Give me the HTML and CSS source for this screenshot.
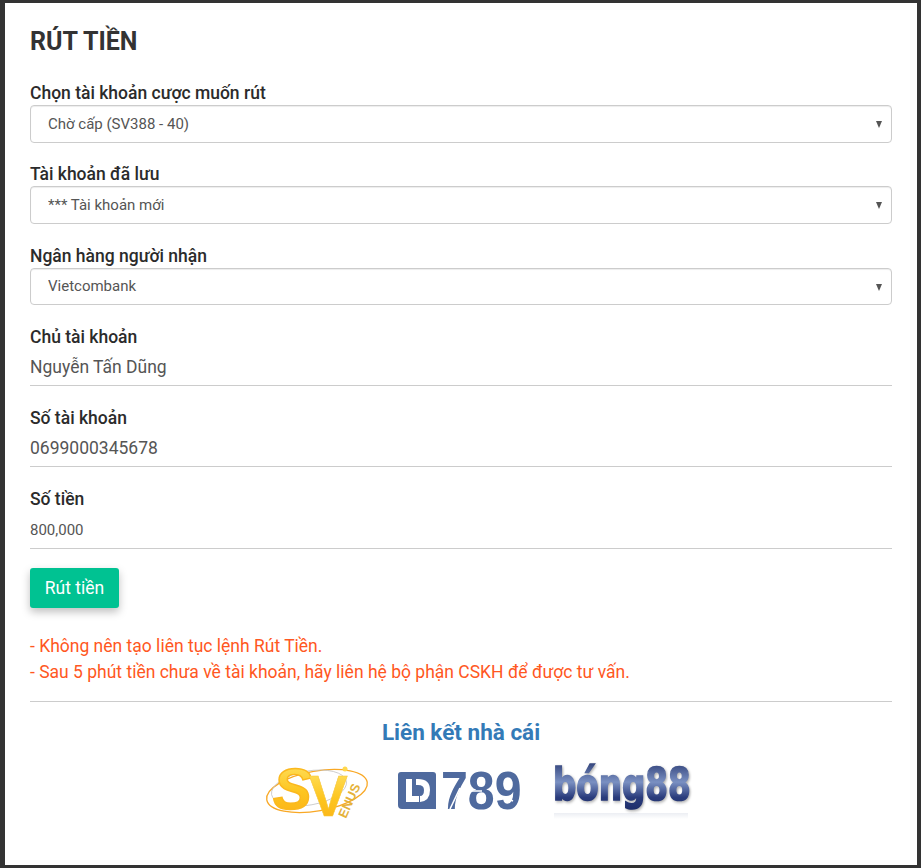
FILE: index.html
```html
<!DOCTYPE html>
<html lang="vi">
<head>
  <meta charset="UTF-8" />
  <title>Rút tiền</title>
  <link rel="stylesheet" href="styles.css">
</head>
<body>
  <div class="panel">
    <h2 class="title">RÚT TIỀN</h2>
    <form class="withdraw-form">
      <div class="field">
        <label for="account">Chọn tài khoản cược muốn rút</label>
        <div class="select-wrap">
          <select id="account"><option>Chờ cấp (SV388 - 40)</option></select>
        </div>
      </div>
      <div class="field">
        <label for="saved">Tài khoản đã lưu</label>
        <div class="select-wrap">
          <select id="saved"><option>*** Tài khoản mới</option></select>
        </div>
      </div>
      <div class="field">
        <label for="bank">Ngân hàng người nhận</label>
        <div class="select-wrap">
          <select id="bank"><option>Vietcombank</option></select>
        </div>
      </div>
      <div class="field">
        <label for="owner">Chủ tài khoản</label>
        <input id="owner" class="line-input" type="text" value="Nguyễn Tấn Dũng">
      </div>
      <div class="field">
        <label for="number">Số tài khoản</label>
        <input id="number" class="line-input" type="text" value="0699000345678">
      </div>
      <div class="field">
        <label for="amount">Số tiền</label>
        <input id="amount" class="line-input small" type="text" value="800,000">
      </div>
      <button class="submit" type="button">Rút tiền</button>
    </form>

    <p class="notes">
      - Không nên tạo liên tục lệnh Rút Tiền.<br>
      - Sau 5 phút tiền chưa về tài khoản, hãy liên hệ bộ phận CSKH để được tư vấn.
    </p>
    <hr class="divider">

    <h3 class="partners-title">Liên kết nhà cái</h3>
    <div class="partners">
      <svg class="logo" width="108" height="60" viewBox="0 0 108 60">
        <defs>
          <linearGradient id="svGold" x1="0" y1="0" x2="0" y2="1">
            <stop offset="0" stop-color="#ffe56a"/>
            <stop offset=".55" stop-color="#fdc51f"/>
            <stop offset="1" stop-color="#fbb016"/>
          </linearGradient>
        </defs>
        <ellipse cx="55" cy="29" rx="51" ry="20" transform="rotate(-10 55 29)" fill="none" stroke="#f9a825" stroke-width="1.3"/>
        <ellipse cx="47" cy="26" rx="38" ry="17" transform="rotate(-10 47 26)" fill="none" stroke="#c4c4c4" stroke-width=".8"/>
        <circle cx="83" cy="7" r="2.5" fill="#ffd84d"/>
        <text class="sv-text" transform="translate(11 47) scale(1.45)" fill="url(#svGold)" stroke="#fbb81e" stroke-width="1">S</text>
        <text class="sv-v" transform="translate(47 54) scale(1.45)" fill="url(#svGold)" stroke="#f6c63a" stroke-width=".4">V</text>
        <text class="sv-small" transform="translate(84 57) rotate(-66)">ENUS</text>
      </svg>
      <svg class="logo" width="126" height="60" viewBox="0 0 126 60">
        <path d="M3 10H35Q38 10 38 13V47H4Q0 47 0 43V13Q0 10 3 10Z" fill="#4f6a9e"/>
        <path d="M8 17H14V34H21V40H8ZM18 17H20Q32 17 32 28Q32 39 22 40V34Q26 34 26 28Q26 23 20 23H18Z" fill="#fff"/>
        <text class="ld-text" transform="translate(43 47) scale(1.05 1.15)">789</text>
        <path d="M52 47L62 26M69 29H84M106 35L115 39" stroke="#fff" stroke-width="1.6" fill="none"/>
      </svg>
      <svg class="logo" width="142" height="60" viewBox="0 0 142 60">
        <defs>
          <linearGradient id="bongBlue" x1="0" y1="0" x2="0" y2="1">
            <stop offset="0" stop-color="#26366f"/>
            <stop offset=".45" stop-color="#7a90c2"/>
            <stop offset=".75" stop-color="#2a3c7c"/>
            <stop offset="1" stop-color="#1e2d69"/>
          </linearGradient>
          <linearGradient id="bongFade" x1="0" y1="0" x2="0" y2="1">
            <stop offset="0" stop-color="#eceef3"/>
            <stop offset="1" stop-color="#fff"/>
          </linearGradient>
        </defs>
        <rect x="2" y="51" width="134" height="6" fill="url(#bongFade)"/>
        <text class="bong-text" transform="translate(1 38) scale(1.02 1.37)" fill="url(#bongBlue)" stroke="url(#bongBlue)" stroke-width="1.2">bóng88</text>
      </svg>
    </div>
  </div>
</body>
</html>
```

FILE: styles.css
```css
* {
  box-sizing: border-box;
}

html, body {
  height: 100%;
}

body {
  margin: 0;
  padding: 3px 4px 3px 5px;
  background: #333;
  font-family: Roboto, "Open Sans", sans-serif;
  color: #333;
  overflow: hidden;
}

.panel {
  height: 100%;
  background: #fff;
  padding: 25px 25px 0;
}

.title {
  margin: 0 0 25px;
  font-size: 25px;
  line-height: 28px;
  font-weight: 700;
}

.withdraw-form {
  display: flex;
  flex-direction: column;
  align-items: stretch;
}

.field {
  display: flex;
  flex-direction: column;
  height: 81.28px;
}

.field label {
  height: 24px;
  font-size: 17.5px;
  line-height: 25px;
  font-weight: 500;
  color: #2b2b2b;
}

.select-wrap {
  position: relative;
}

.select-wrap::after {
  content: "";
  position: absolute;
  top: 16px;
  right: 10px;
  border-left: 3.5px solid transparent;
  border-right: 3.5px solid transparent;
  border-top: 7px solid #555;
}

.select-wrap select {
  display: block;
  width: 100%;
  height: 37.6px;
  padding: 0 30px 0 17px;
  border: 1px solid #ccc;
  border-radius: 4px;
  background: #fff;
  box-shadow: inset 0 1px 1px rgba(0,0,0,.075);
  font-family: inherit;
  font-size: 15px;
  color: #555;
  appearance: none;
}

.line-input {
  display: block;
  width: 100%;
  height: 37.4px;
  padding: 0;
  border: 0;
  border-bottom: 1px solid #ccc;
  outline: none;
  font-family: inherit;
  font-size: 17.5px;
  color: #555;
}

.line-input.small {
  font-size: 15px;
}

.submit {
  align-self: flex-start;
  width: 89px;
  height: 40px;
  margin-top: -.5px;
  border: none;
  border-radius: 3px;
  background: #00c292;
  box-shadow: 0 4px 8px rgba(0,0,0,.25);
  font-family: inherit;
  font-size: 17.5px;
  color: #fff;
  cursor: pointer;
}

.notes {
  margin: 25px 0 0;
  font-size: 17.5px;
  line-height: 26px;
  color: #ff5722;
}

.divider {
  margin: 16px 0 0;
  border: 0;
  border-top: 1px solid #ccc;
}

.partners-title {
  margin: 17px 0 0;
  text-align: center;
  font-size: 22.5px;
  line-height: 26px;
  font-weight: 700;
  color: #337ab7;
}

.partners {
  display: flex;
  justify-content: center;
  align-items: flex-start;
  gap: 28px;
  margin-top: 17px;
  padding-left: 34px;
}

.logo {
  display: block;
  flex: none;
}

.sv-text, .sv-v {
  font-family: "Liberation Sans", sans-serif;
  font-size: 40px;
  font-weight: 700;
}

.sv-text {
  font-style: italic;
}

.sv-small {
  font-family: "Liberation Sans", sans-serif;
  font-size: 13px;
  font-weight: 700;
  fill: #e5b23a;
}

.ld-text {
  font-family: "Liberation Sans", sans-serif;
  font-size: 46px;
  font-weight: 700;
  fill: #4f6a9e;
}

.bong-text {
  font-family: "DejaVu Sans", sans-serif;
  font-size: 32px;
  font-weight: 700;
  filter: drop-shadow(1px 1px 1px #aaa);
}
```
